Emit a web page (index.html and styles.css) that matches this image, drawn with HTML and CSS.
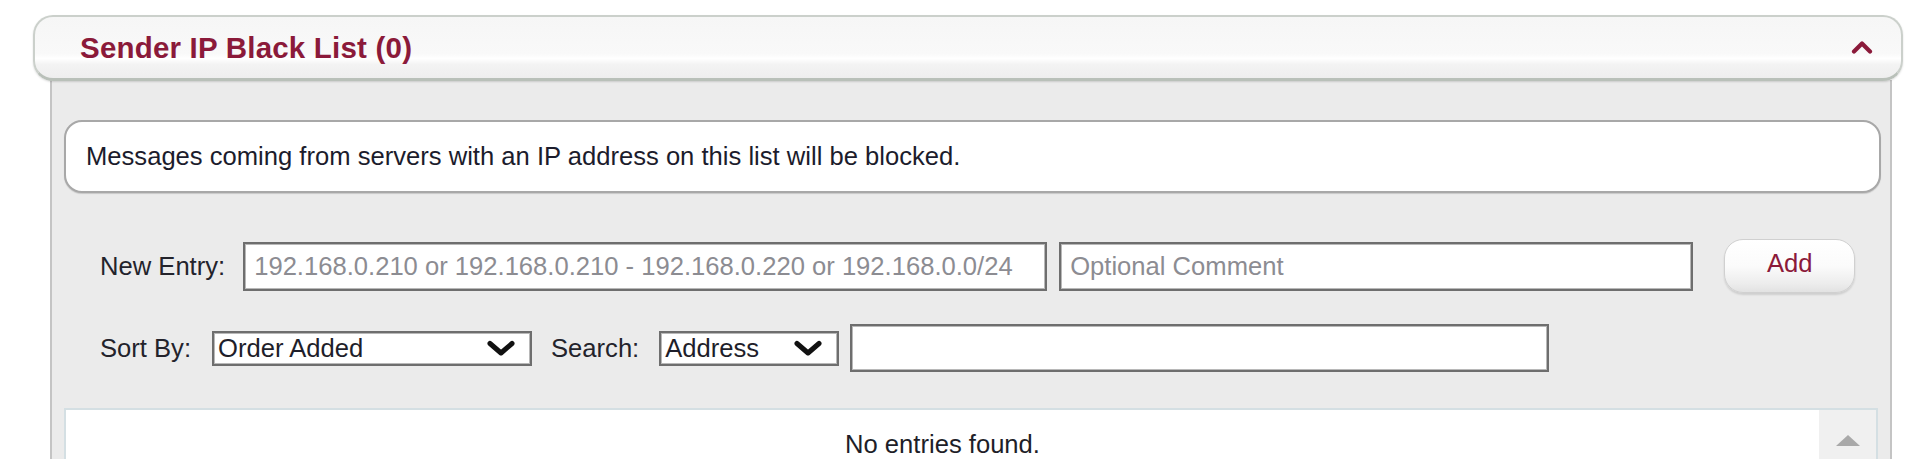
FILE: index.html
```html
<!DOCTYPE html>
<html lang="en">
<head>
<meta charset="utf-8">
<title>Sender IP Black List</title>
<link rel="stylesheet" href="styles.css">
</head>
<body>
<div class="page">
  <div class="section">
    <div class="section-header">
      <h2 class="section-title">Sender IP Black List (0)</h2>
      <svg class="collapse-icon" width="22" height="14" viewBox="0 0 22 14" aria-hidden="true">
        <polyline points="3,11.5 11,3.5 19,11.5" fill="none" stroke="#8b1a3a" stroke-width="4.2" stroke-linecap="round" stroke-linejoin="round"/>
      </svg>
    </div>
    <div class="section-body">
      <div class="notice">Messages coming from servers with an IP address on this list will be blocked.</div>
      <div class="row row-entry">
        <span class="label label-entry">New Entry:</span>
        <input class="text-input input-address" type="text" placeholder="192.168.0.210 or 192.168.0.210 - 192.168.0.220 or 192.168.0.0/24">
        <input class="text-input input-comment" type="text" placeholder="Optional Comment">
        <button class="btn-add" type="button">Add</button>
      </div>
      <div class="row row-sort">
        <span class="label label-sort">Sort By:</span>
        <div class="select select-sort">
          <span class="select-text">Order Added</span>
          <svg class="select-arrow" width="30" height="17" viewBox="0 0 30 17" aria-hidden="true">
            <polyline points="4,3.5 15,13 26,3.5" fill="none" stroke="#111" stroke-width="5" stroke-linecap="round" stroke-linejoin="round"/>
          </svg>
        </div>
        <span class="label label-search">Search:</span>
        <div class="select select-field">
          <span class="select-text">Address</span>
          <svg class="select-arrow" width="30" height="17" viewBox="0 0 30 17" aria-hidden="true">
            <polyline points="4,3.5 15,13 26,3.5" fill="none" stroke="#111" stroke-width="5" stroke-linecap="round" stroke-linejoin="round"/>
          </svg>
        </div>
        <input class="text-input input-search" type="text">
      </div>
      <div class="list">
        <div class="list-content">No entries found.</div>
        <div class="scrollbar">
          <svg class="scroll-up" width="26" height="13" viewBox="0 0 26 13" aria-hidden="true">
            <polygon points="1,12 13,1 25,12" fill="#a9a9a9"/>
          </svg>
        </div>
      </div>
    </div>
  </div>
</div>
</body>
</html>
```

FILE: styles.css
```css
* {
  box-sizing: border-box;
}

html, body {
  margin: 0;
  padding: 0;
  background: #ffffff;
  overflow: hidden;
}

body {
  font-family: "Liberation Sans", Arial, sans-serif;
  font-size: 25.6px;
  color: #222228;
}

.page {
  padding: 15px 0 0 33px;
  width: 1903px;
}

.section {
  display: flex;
  flex-direction: column;
}

.section-header {
  position: relative;
  z-index: 1;
  height: 66px;
  display: flex;
  align-items: center;
  justify-content: space-between;
  padding: 0 28px 0 45px;
  border: 2px solid #cbd0cb;
  border-bottom: 3px solid #b9c0b9;
  border-radius: 20px;
  background: linear-gradient(to bottom, #f6f6f6 0%, #f9f9f9 60%, #ffffff 68%, #f3f3f3 78%, #eeeeee 100%);
  box-shadow: 0 1px 2px rgba(0, 0, 0, 0.14);
}

.section-title {
  margin: 0;
  padding-top: 1px;
  font-family: "Liberation Sans", Arial, sans-serif;
  font-size: 29.5px;
  font-weight: bold;
  color: #8b1a3a;
  letter-spacing: 0.2px;
}

.collapse-icon {
  display: block;
  margin-top: -2px;
}

.section-body {
  margin: -1px 11px 0 17px;
  padding: 40px 9px 0 12px;
  background: #ebebeb;
  border-left: 2px solid #c4c4c4;
  border-right: 2px solid #c4c4c4;
  height: 400px;
}

.notice {
  height: 73px;
  display: flex;
  align-items: center;
  padding: 0 20px;
  background: #ffffff;
  border: 2px solid #a8a8a8;
  border-radius: 18px;
  box-shadow: 0 1px 1px rgba(0, 0, 0, 0.15);
  color: #1c1c2c;
}

.row {
  display: flex;
  align-items: center;
}

.row-entry {
  margin-top: 46px;
  height: 54px;
  padding-left: 36px;
}

.row-sort {
  margin-top: 31px;
  height: 48px;
  padding-left: 36px;
}

.label {
  white-space: nowrap;
  color: #23232b;
}

.label-entry {
  margin-right: 18px;
}

.label-sort {
  margin-right: 21px;
}

.label-search {
  margin: 0 20px 0 19px;
}

.text-input {
  font-family: "Liberation Sans", Arial, sans-serif;
  font-size: 25.6px;
  color: #222;
  background: #ffffff;
  border: 2px solid #6e6e6e;
  box-shadow: inset 0 0 0 1px #b8b8b8;
  padding: 0 9px;
  margin: 0;
  outline: none;
  border-radius: 0;
}

.text-input::placeholder {
  color: #8c8c92;
  opacity: 1;
}

.input-address {
  width: 804px;
  height: 49px;
}

.input-comment {
  width: 634px;
  height: 49px;
  margin-left: 12px;
}

.input-search {
  width: 699px;
  height: 48px;
  margin-left: 11px;
}

.btn-add {
  width: 131px;
  height: 54px;
  margin-left: 31px;
  font-family: "Liberation Sans", Arial, sans-serif;
  font-size: 25.6px;
  color: #8b1a3a;
  background: linear-gradient(to bottom, #ffffff 0%, #fbfbfb 50%, #ececec 85%, #e2e2e2 100%);
  border: 1px solid #d0d0d0;
  border-radius: 19px;
  box-shadow: 0 2px 2px rgba(0, 0, 0, 0.12);
  padding: 0 0 6px 0;
  cursor: pointer;
}

.select {
  display: flex;
  align-items: center;
  justify-content: space-between;
  height: 35px;
  background: #ffffff;
  border: 2px solid #6e6e6e;
  box-shadow: inset 0 0 0 1px #b8b8b8;
  padding: 0 14px 0 4px;
  color: #1e1e2a;
}

.select-sort {
  width: 320px;
}

.select-field {
  width: 180px;
}

.select-text {
  white-space: nowrap;
}

.select-arrow {
  display: block;
  flex: none;
}

.list {
  margin-top: 36px;
  margin-right: 3px;
  height: 130px;
  display: flex;
  background: #ffffff;
  border: 2px solid #d4dfe3;
}

.list-content {
  flex: 1;
  text-align: center;
  padding-top: 19px;
  line-height: 30px;
  color: #1e1e28;
}

.scrollbar {
  width: 57px;
  background: #f0f0f0;
  display: flex;
  justify-content: center;
  padding-top: 24px;
}

.scroll-up {
  display: block;
}
```
